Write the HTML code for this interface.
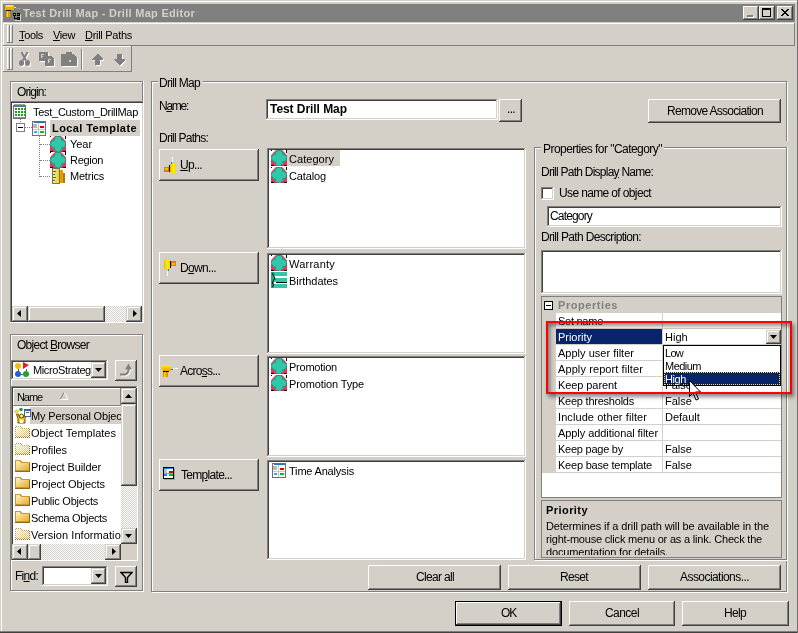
<!DOCTYPE html><html><head><meta charset="utf-8"><title>Test Drill Map - Drill Map Editor</title><style>
html,body{margin:0;padding:0;background:#D4D0C8;}
body{width:798px;height:633px;overflow:hidden;font-family:"Liberation Sans",sans-serif;font-size:11px;}
#win{will-change:transform;position:relative;width:798px;height:633px;background:#D4D0C8;overflow:hidden;}
#win div,#win span.t,#win svg{position:absolute;box-sizing:border-box;}
span.t{white-space:nowrap;line-height:16px;height:16px;}
span.t u{text-decoration:underline;text-underline-offset:1px;}
.btn{background:#D4D0C8;box-shadow:inset -1px -1px #404040,inset 1px 1px #fff,inset -2px -2px #808080,inset 2px 2px #D4D0C8;}
.sbtn{background:#D4D0C8;box-shadow:inset -1px -1px #404040,inset 1px 1px #D4D0C8,inset -2px -2px #808080,inset 2px 2px #fff;}
.sunk{background:#fff;box-shadow:inset -1px -1px #fff,inset 1px 1px #808080,inset -2px -2px #D4D0C8,inset 2px 2px #404040;}
.grp{border:1px solid #808080;box-shadow:1px 1px #fff,inset 1px 1px #fff;}
.thin{box-shadow:inset -1px -1px #808080,inset 1px 1px #fff;}
.thinsunk{box-shadow:inset -1px -1px #fff,inset 1px 1px #808080;}
.hatch{background-image:conic-gradient(#fff 25%,#D4D0C8 0 50%,#fff 0 75%,#D4D0C8 0);background-size:2px 2px;}

</style></head><body><div id="win">
<div class="" style="left:0px;top:0px;width:798px;height:633px;background:#D4D0C8;"></div>
<div class="" style="left:1px;top:1px;width:796px;height:630px;border-top:1px solid #fff;border-left:1px solid #fff;"></div>
<div class="" style="left:0px;top:631px;width:798px;height:1px;background:#808080;"></div>
<div class="" style="left:0px;top:632px;width:798px;height:1px;background:#404040;"></div>
<div class="" style="left:797px;top:0px;width:1px;height:633px;background:#707070;"></div>
<div class="" style="left:3px;top:4px;width:792px;height:18px;background:#808080;"></div>
<svg style="left:5px;top:5px" width="17" height="16" viewBox="0 0 17 16" shape-rendering="crispEdges"><rect x="0" y="0" width="9" height="5" rx="1" fill="#F0B000"/><rect x="1" y="0" width="7" height="2" fill="#FFE040"/><rect x="1" y="5" width="5" height="1" fill="#201000"/><rect x="1" y="6" width="4" height="6" fill="#E8A000"/><rect x="2" y="6" width="1" height="6" fill="#FFD040"/><rect x="9" y="2" width="2" height="1" fill="#C0F0FF"/><rect x="11" y="3" width="5" height="1" fill="#909890"/><rect x="8" y="8" width="3" height="3" fill="#000"/><rect x="9" y="9" width="1" height="1" fill="#F0F000"/><rect x="12" y="8" width="3" height="3" fill="#000"/><rect x="13" y="9" width="1" height="1" fill="#00E000"/><rect x="12" y="12" width="3" height="3" fill="#000"/><rect x="13" y="13" width="1" height="1" fill="#F00000"/><rect x="9" y="11" width="1" height="3" fill="#000"/><rect x="9" y="13" width="3" height="1" fill="#000"/><rect x="15" y="9" width="1" height="7" fill="#D4D0C8"/><rect x="10" y="15" width="6" height="1" fill="#D4D0C8"/></svg>
<div class="btn" style="left:743px;top:6px;width:16px;height:14px;"><div style="left:5px;top:10px;width:6px;height:2px;background:#fff"></div><div style="left:4px;top:9px;width:6px;height:2px;background:#808080"></div></div>
<div class="btn" style="left:759px;top:6px;width:16px;height:14px;"><div style="left:3px;top:2px;width:9px;height:9px;border:1px solid #000;border-top-width:2px"></div></div>
<div class="btn" style="left:777px;top:6px;width:16px;height:14px;"><svg style="left:4px;top:3px" width="8" height="7" shape-rendering="crispEdges"><path d="M0 0h2v1h1v1h2v-1h1v-1h2v1h-1v1h-1v1h-1v1h1v1h1v1h1v1h-2v-1h-1v-1h-2v1h-1v1h-2v-1h1v-1h1v-1h1v-1h-1v-1h-1v-1h-1z" fill="#000"/></svg></div>
<div class="thin" style="left:3px;top:23px;width:792px;height:23px;"></div>
<div class="thin" style="left:7px;top:25px;width:3px;height:18px;"></div>
<div class="thin" style="left:10px;top:25px;width:3px;height:18px;"></div>
<div class="thin" style="left:3px;top:46px;width:129px;height:26px;"></div>
<div class="thin" style="left:7px;top:48px;width:3px;height:22px;"></div>
<div class="thin" style="left:10px;top:48px;width:3px;height:22px;"></div>
<svg style="left:19px;top:52px" width="12" height="15" viewBox="0 0 12 15" shape-rendering="crispEdges"><g transform="translate(1,1)"><g shape-rendering="auto"><path d="M2.500 0L7 8.500M8.500 0L4 8.500" stroke="#fff" stroke-width="2" fill="none"/><ellipse cx="2.500" cy="11" rx="2.500" ry="3" fill="#fff"/><ellipse cx="8.500" cy="11" rx="2.500" ry="3" fill="#fff"/></g></g><g><g shape-rendering="auto"><path d="M2.500 0L7 8.500M8.500 0L4 8.500" stroke="#808080" stroke-width="2" fill="none"/><ellipse cx="2.500" cy="11" rx="2.500" ry="3" fill="#808080"/><ellipse cx="8.500" cy="11" rx="2.500" ry="3" fill="#808080"/></g></g></svg>
<svg style="left:39px;top:52px" width="16" height="15" viewBox="0 0 16 15" shape-rendering="crispEdges"><g transform="translate(1,1)"><rect x="0" y="0" width="9" height="9" fill="#fff"/><path d="M6 4h6l3 3v7h-9z" fill="#fff"/><rect x="2" y="2" width="3" height="1" fill="none"/><rect x="2" y="3" width="1" height="3" fill="none"/><rect x="3" y="4" width="1" height="1" fill="none"/><rect x="9" y="7" width="3" height="1" fill="none"/><rect x="9" y="8" width="1" height="3" fill="none"/><rect x="10" y="9" width="1" height="1" fill="none"/></g><g><rect x="0" y="0" width="9" height="9" fill="#808080"/><path d="M6 4h6l3 3v7h-9z" fill="#808080"/><rect x="2" y="2" width="3" height="1" fill="#D4D0C8"/><rect x="2" y="3" width="1" height="3" fill="#D4D0C8"/><rect x="3" y="4" width="1" height="1" fill="#D4D0C8"/><rect x="9" y="7" width="3" height="1" fill="#D4D0C8"/><rect x="9" y="8" width="1" height="3" fill="#D4D0C8"/><rect x="10" y="9" width="1" height="1" fill="#D4D0C8"/></g></svg>
<svg style="left:61px;top:52px" width="17" height="15" viewBox="0 0 17 15" shape-rendering="crispEdges"><g transform="translate(1,1)"><path d="M0 2h5v-2h6v2h2l3 4v8h-16z" fill="#fff"/><rect x="8" y="8" width="2" height="2" fill="none"/></g><g><path d="M0 2h5v-2h6v2h2l3 4v8h-16z" fill="#808080"/><rect x="8" y="8" width="2" height="2" fill="#D4D0C8"/></g></svg>
<div class="" style="left:81px;top:49px;width:2px;height:21px;border-left:1px solid #808080;border-right:1px solid #fff;"></div>
<svg style="left:92px;top:54px" width="12" height="12" viewBox="0 0 12 12" shape-rendering="crispEdges"><g transform="translate(1,1)"><path d="M5 0h1l5 5v1h-3v5h-5v-5h-3v-1z" fill="#fff"/></g><g><path d="M5 0h1l5 5v1h-3v5h-5v-5h-3v-1z" fill="#808080"/></g></svg>
<svg style="left:114px;top:54px" width="12" height="12" viewBox="0 0 12 12" shape-rendering="crispEdges"><g transform="translate(1,1)"><path d="M5 11h1l5-5v-1h-3v-5h-5v5h-3v1z" fill="#fff"/></g><g><path d="M5 11h1l5-5v-1h-3v-5h-5v5h-3v1z" fill="#808080"/></g></svg>
<div class="thinsunk" style="left:10px;top:81px;width:134px;height:242px;"></div>
<div class="thin" style="left:11px;top:82px;width:132px;height:20px;"></div>
<div class="sunk" style="left:11px;top:102px;width:132px;height:220px;box-shadow:inset 1px 1px #404040,inset -1px -1px #D4D0C8;"></div>
<svg style="left:13px;top:104px" width="13" height="15" viewBox="0 0 13 15" shape-rendering="crispEdges"><rect x="0.5" y="2.5" width="12" height="12" fill="#fff" stroke="#707070"/><rect x="1" y="0" width="11" height="1" fill="#A0A0A0"/><rect x="0" y="1" width="13" height="2" fill="#5878A0"/><rect x="2" y="4" width="2" height="2" fill="#18A018"/><rect x="2" y="7" width="2" height="2" fill="#18A018"/><rect x="2" y="10" width="2" height="2" fill="#18A018"/><rect x="5" y="4" width="2" height="2" fill="#18A018"/><rect x="5" y="7" width="2" height="2" fill="#18A018"/><rect x="5" y="10" width="2" height="2" fill="#18A018"/><rect x="8" y="4" width="2" height="2" fill="#18A018"/><rect x="8" y="7" width="2" height="2" fill="#18A018"/><rect x="8" y="10" width="2" height="2" fill="#18A018"/><rect x="11" y="4" width="2" height="2" fill="#18A018"/><rect x="11" y="7" width="2" height="2" fill="#18A018"/><rect x="11" y="10" width="2" height="2" fill="#18A018"/><rect x="1" y="13" width="11" height="1" fill="#909090"/></svg>
<div class="" style="left:20px;top:119px;width:1px;height:5px;border-left:1px dotted #808080;"></div>
<div class="" style="left:16px;top:123px;width:9px;height:9px;border:1px solid #808080;background:#fff;"><div style="left:1px;top:3px;width:5px;height:1px;background:#000"></div></div>
<div class="" style="left:25px;top:127px;width:7px;height:1px;border-top:1px dotted #808080;"></div>
<svg style="left:32px;top:121px" width="14" height="15" viewBox="0 0 14 15" shape-rendering="crispEdges"><rect x="0.5" y="0.5" width="13" height="14" fill="#fff" stroke="#707070"/><rect x="1" y="1" width="12" height="1" fill="#3070B0"/><rect x="1" y="1" width="1" height="1" fill="#fff"/><rect x="1" y="3" width="4" height="4" fill="#B8B8B8"/><rect x="6" y="2" width="1" height="12" fill="#C8C8C8"/><rect x="1" y="8" width="12" height="1" fill="#C8C8C8"/><rect x="8" y="5" width="4" height="2" fill="#E00000"/><rect x="8" y="10" width="4" height="2" fill="#00C020"/><rect x="2" y="10" width="3" height="2" fill="#20B0F0"/></svg>
<div class="" style="left:50px;top:120px;width:90px;height:16px;background:#D4D0C8;"></div>
<div class="" style="left:39px;top:135px;width:1px;height:42px;border-left:1px dotted #808080;"></div>
<div class="" style="left:40px;top:144px;width:10px;height:1px;border-top:1px dotted #808080;"></div>
<div class="" style="left:40px;top:160px;width:10px;height:1px;border-top:1px dotted #808080;"></div>
<div class="" style="left:40px;top:176px;width:10px;height:1px;border-top:1px dotted #808080;"></div>
<svg style="left:50px;top:136px" width="16" height="16" viewBox="0 0 16 16" shape-rendering="crispEdges"><rect x="0" y="0" width="16" height="16" fill="#fff"/><rect x="0" y="10" width="16" height="6" fill="#E83058"/><polygon points="6.5,0 9.5,0 12.800,3.200 16,7 16,9 12.800,12.800 9.5,16 6.5,16 3.200,12.800 0,9 0,7 3.200,3.200" fill="#E83058" stroke="#E83058" stroke-width="2" shape-rendering="auto"/><path d="M0 0.5h1M15.5 0v3M0 15.5h3M13 15.5h3" stroke="#000" fill="none"/><polygon points="6.5,0 9.5,0 12.800,3.200 16,7 16,9 12.800,12.800 9.5,16 6.5,16 3.200,12.800 0,9 0,7 3.200,3.200" fill="#30C8A8" shape-rendering="auto"/><polygon points="6.5,0.5 9.5,0.5 12.5,3.500 15.5,7 15.5,9 12.5,12.5 9.5,15.5 6.5,15.5 3.500,12.5 0.5,9 0.5,7 3.500,3.500" fill="none" stroke="#189878" stroke-width="1" stroke-dasharray="3 1" shape-rendering="auto"/><rect x="3" y="3" width="2" height="2" fill="#20A888"/><rect x="11" y="3" width="2" height="2" fill="#20A888"/><rect x="3" y="11" width="2" height="2" fill="#20A888"/><rect x="11" y="11" width="2" height="2" fill="#20A888"/></svg>
<svg style="left:50px;top:152px" width="16" height="16" viewBox="0 0 16 16" shape-rendering="crispEdges"><rect x="0" y="0" width="16" height="16" fill="#fff"/><rect x="0" y="10" width="16" height="6" fill="#E83058"/><polygon points="6.5,0 9.5,0 12.800,3.200 16,7 16,9 12.800,12.800 9.5,16 6.5,16 3.200,12.800 0,9 0,7 3.200,3.200" fill="#E83058" stroke="#E83058" stroke-width="2" shape-rendering="auto"/><path d="M0 0.5h1M15.5 0v3M0 15.5h3M13 15.5h3" stroke="#000" fill="none"/><polygon points="6.5,0 9.5,0 12.800,3.200 16,7 16,9 12.800,12.800 9.5,16 6.5,16 3.200,12.800 0,9 0,7 3.200,3.200" fill="#30C8A8" shape-rendering="auto"/><polygon points="6.5,0.5 9.5,0.5 12.5,3.500 15.5,7 15.5,9 12.5,12.5 9.5,15.5 6.5,15.5 3.500,12.5 0.5,9 0.5,7 3.500,3.500" fill="none" stroke="#189878" stroke-width="1" stroke-dasharray="3 1" shape-rendering="auto"/><rect x="3" y="3" width="2" height="2" fill="#20A888"/><rect x="11" y="3" width="2" height="2" fill="#20A888"/><rect x="3" y="11" width="2" height="2" fill="#20A888"/><rect x="11" y="11" width="2" height="2" fill="#20A888"/></svg>
<svg style="left:52px;top:168px" width="14" height="16" viewBox="0 0 14 16" shape-rendering="crispEdges"><defs><linearGradient id="rg" x1="0" y1="0" x2="1" y2="0"><stop offset="0" stop-color="#F8F080"/><stop offset="1" stop-color="#E8D020"/></linearGradient></defs><rect x="8" y="2" width="3" height="13" fill="#E0A000"/><rect x="11" y="5" width="2" height="10" fill="#B87800"/><rect x="0.5" y="0.5" width="7" height="15" fill="url(#rg)" stroke="#707070"/><rect x="1" y="3" width="3" height="1" fill="#606060"/><rect x="1" y="6" width="2" height="1" fill="#606060"/><rect x="1" y="9" width="3" height="1" fill="#606060"/><rect x="1" y="12" width="2" height="1" fill="#606060"/></svg>
<div class="hatch" style="left:12px;top:306px;width:130px;height:16px;"></div>
<div class="sbtn" style="left:12px;top:306px;width:16px;height:16px;"><svg style="left:5px;top:4px" width="4" height="7"><polygon points="4,0 4,7 0,3.5" fill="#000"/></svg></div>
<div class="sbtn" style="left:28px;top:306px;width:77px;height:16px;"></div>
<div class="sbtn" style="left:126px;top:306px;width:16px;height:16px;"><svg style="left:7px;top:4px" width="4" height="7"><polygon points="0,0 0,7 4,3.5" fill="#000"/></svg></div>
<div class="grp" style="left:10px;top:334px;width:133px;height:257px;"></div>
<div class="sunk" style="left:11px;top:360px;width:97px;height:20px;"></div>
<svg style="left:14px;top:362px" width="16" height="16" viewBox="0 0 16 16" shape-rendering="crispEdges"><circle cx="4" cy="4" r="3" fill="#F0C000" shape-rendering="auto"/><circle cx="4" cy="12" r="3" fill="#2060D0" shape-rendering="auto"/><circle cx="12" cy="12" r="3" fill="#20A030" shape-rendering="auto"/><polygon points="9,0 15,3 9,7" fill="#E02020" shape-rendering="auto"/><path d="M4 7v3M7 12h2M12 7v2" stroke="#606060" fill="none"/></svg>
<div class="sbtn" style="left:91px;top:362px;width:15px;height:16px;"><svg style="left:4px;top:6px" width="7" height="4"><polygon points="0,0 7,0 3.5,4" fill="#000"/></svg></div>
<div class="btn" style="left:115px;top:360px;width:22px;height:21px;"><svg style="left:4px;top:3px" width="15" height="15"><g transform="translate(1,1)"><path d="M1 11.5H6Q9.500 11 9.500 6" stroke="#fff" stroke-width="2" fill="none"/><path d="M9.500 0.5L13 6.500H6z" fill="#fff"/></g><path d="M1 11.5H6Q9.500 11 9.500 6" stroke="#808080" stroke-width="2" fill="none"/><path d="M9.500 0.5L13 6.500H6z" fill="#808080"/></svg></div>
<div class="sunk" style="left:11px;top:386px;width:127px;height:175px;"></div>
<div class="thin" style="left:13px;top:388px;width:108px;height:18px;background:#D4D0C8;"></div>
<svg style="left:60px;top:392px" width="9" height="8"><path d="M0.5 7L4 0.5" stroke="#808080" fill="none"/><path d="M4.5 0.5L8 7.5H0.5" stroke="#fff" fill="none"/></svg>
<div class="hatch" style="left:121px;top:388px;width:16px;height:156px;"></div>
<div class="sbtn" style="left:121px;top:388px;width:16px;height:16px;"><svg style="left:4px;top:6px" width="7" height="4"><polygon points="0,4 7,4 3.5,0" fill="#000"/></svg></div>
<div class="sbtn" style="left:121px;top:404px;width:16px;height:82px;"></div>
<div class="sbtn" style="left:121px;top:528px;width:16px;height:16px;"><svg style="left:4px;top:6px" width="7" height="4"><polygon points="0,0 7,0 3.5,4" fill="#000"/></svg></div>
<div class="hatch" style="left:12px;top:544px;width:109px;height:16px;"></div>
<div class="sbtn" style="left:12px;top:544px;width:16px;height:16px;"><svg style="left:5px;top:4px" width="4" height="7"><polygon points="4,0 4,7 0,3.5" fill="#000"/></svg></div>
<div class="sbtn" style="left:28px;top:544px;width:13px;height:16px;"></div>
<div class="sbtn" style="left:105px;top:544px;width:16px;height:16px;"><svg style="left:7px;top:4px" width="4" height="7"><polygon points="0,0 0,7 4,3.5" fill="#000"/></svg></div>
<div class="" style="left:121px;top:544px;width:16px;height:16px;background:#D4D0C8;"></div>
<div class="" style="left:30px;top:407px;width:91px;height:17px;background:#D4D0C8;"></div>
<svg style="left:14px;top:407px" width="17" height="17" viewBox="0 0 17 17" shape-rendering="crispEdges"><path d="M2.500 7.500L4 11.500V16H11V11.500L12.500 7.500L10.500 7L9.500 10.500H5.500L4.500 7Z" fill="#F8D020" stroke="#705000" shape-rendering="auto"/><circle cx="7.500" cy="9" r="2" fill="#FFF0A0" stroke="#705000" shape-rendering="auto"/><rect x="6" y="13" width="3" height="3" fill="#fff"/><rect x="10" y="2" width="6" height="7" fill="#fff" stroke="#506080"/><rect x="10" y="2" width="6" height="2" fill="#3060B0"/><rect x="12" y="5" width="3" height="1" fill="#506080"/><circle cx="7" cy="2.500" r="1.800" fill="#18A028" shape-rendering="auto"/><path d="M2.500 2.500L4.500 4.500L2.500 6.500L0.5 4.500Z" fill="#F8E020" stroke="#C0A000" stroke-width="0.5" shape-rendering="auto"/></svg>
<svg style="left:15px;top:426px" width="15" height="12" viewBox="0 0 15 12" shape-rendering="crispEdges"><defs><linearGradient id="fg" x1="0" y1="0" x2="1" y2="1"><stop offset="0" stop-color="#FFF8C8"/><stop offset="1" stop-color="#E8A828"/></linearGradient><pattern id="dp" width="2" height="2" patternUnits="userSpaceOnUse"><rect x="0" y="0" width="1" height="1" fill="#fff"/><rect x="1" y="1" width="1" height="1" fill="#fff"/></pattern></defs><path d="M0.5 0.5H5.5L6.500 2.500H14.500V10.500H0.5Z" fill="url(#fg)" stroke="#C89838"/><path d="M0 11.5H15M14.500 3V11" stroke="#906818" fill="none"/><rect x="0" y="0" width="15" height="12" fill="url(#dp)"/></svg>
<svg style="left:15px;top:443px" width="15" height="12" viewBox="0 0 15 12" shape-rendering="crispEdges"><defs><linearGradient id="fg" x1="0" y1="0" x2="1" y2="1"><stop offset="0" stop-color="#FFF8C8"/><stop offset="1" stop-color="#E8A828"/></linearGradient><pattern id="dp" width="2" height="2" patternUnits="userSpaceOnUse"><rect x="0" y="0" width="1" height="1" fill="#fff"/><rect x="1" y="1" width="1" height="1" fill="#fff"/></pattern></defs><path d="M0.5 0.5H5.5L6.500 2.500H14.500V10.500H0.5Z" fill="url(#fg)" stroke="#C89838"/><path d="M0 11.5H15M14.500 3V11" stroke="#906818" fill="none"/><rect x="0" y="0" width="15" height="12" fill="url(#dp)"/></svg>
<svg style="left:15px;top:460px" width="15" height="12" viewBox="0 0 15 12" shape-rendering="crispEdges"><defs><linearGradient id="fg" x1="0" y1="0" x2="1" y2="1"><stop offset="0" stop-color="#FFF8C8"/><stop offset="1" stop-color="#E8A828"/></linearGradient><pattern id="dp" width="2" height="2" patternUnits="userSpaceOnUse"><rect x="0" y="0" width="1" height="1" fill="#fff"/><rect x="1" y="1" width="1" height="1" fill="#fff"/></pattern></defs><path d="M0.5 0.5H5.5L6.500 2.500H14.500V10.500H0.5Z" fill="url(#fg)" stroke="#C89838"/><path d="M0 11.5H15M14.500 3V11" stroke="#906818" fill="none"/></svg>
<svg style="left:15px;top:477px" width="15" height="12" viewBox="0 0 15 12" shape-rendering="crispEdges"><defs><linearGradient id="fg" x1="0" y1="0" x2="1" y2="1"><stop offset="0" stop-color="#FFF8C8"/><stop offset="1" stop-color="#E8A828"/></linearGradient><pattern id="dp" width="2" height="2" patternUnits="userSpaceOnUse"><rect x="0" y="0" width="1" height="1" fill="#fff"/><rect x="1" y="1" width="1" height="1" fill="#fff"/></pattern></defs><path d="M0.5 0.5H5.5L6.500 2.500H14.500V10.500H0.5Z" fill="url(#fg)" stroke="#C89838"/><path d="M0 11.5H15M14.500 3V11" stroke="#906818" fill="none"/></svg>
<svg style="left:15px;top:494px" width="15" height="12" viewBox="0 0 15 12" shape-rendering="crispEdges"><defs><linearGradient id="fg" x1="0" y1="0" x2="1" y2="1"><stop offset="0" stop-color="#FFF8C8"/><stop offset="1" stop-color="#E8A828"/></linearGradient><pattern id="dp" width="2" height="2" patternUnits="userSpaceOnUse"><rect x="0" y="0" width="1" height="1" fill="#fff"/><rect x="1" y="1" width="1" height="1" fill="#fff"/></pattern></defs><path d="M0.5 0.5H5.5L6.500 2.500H14.500V10.500H0.5Z" fill="url(#fg)" stroke="#C89838"/><path d="M0 11.5H15M14.500 3V11" stroke="#906818" fill="none"/></svg>
<svg style="left:15px;top:511px" width="15" height="12" viewBox="0 0 15 12" shape-rendering="crispEdges"><defs><linearGradient id="fg" x1="0" y1="0" x2="1" y2="1"><stop offset="0" stop-color="#FFF8C8"/><stop offset="1" stop-color="#E8A828"/></linearGradient><pattern id="dp" width="2" height="2" patternUnits="userSpaceOnUse"><rect x="0" y="0" width="1" height="1" fill="#fff"/><rect x="1" y="1" width="1" height="1" fill="#fff"/></pattern></defs><path d="M0.5 0.5H5.5L6.500 2.500H14.500V10.500H0.5Z" fill="url(#fg)" stroke="#C89838"/><path d="M0 11.5H15M14.500 3V11" stroke="#906818" fill="none"/></svg>
<svg style="left:15px;top:528px" width="15" height="12" viewBox="0 0 15 12" shape-rendering="crispEdges"><defs><linearGradient id="fg" x1="0" y1="0" x2="1" y2="1"><stop offset="0" stop-color="#FFF8C8"/><stop offset="1" stop-color="#E8A828"/></linearGradient><pattern id="dp" width="2" height="2" patternUnits="userSpaceOnUse"><rect x="0" y="0" width="1" height="1" fill="#fff"/><rect x="1" y="1" width="1" height="1" fill="#fff"/></pattern></defs><path d="M0.5 0.5H5.5L6.500 2.500H14.500V10.500H0.5Z" fill="url(#fg)" stroke="#C89838"/><path d="M0 11.5H15M14.500 3V11" stroke="#906818" fill="none"/><rect x="0" y="0" width="15" height="12" fill="url(#dp)"/></svg>
<div class="sunk" style="left:42px;top:566px;width:66px;height:20px;"></div>
<div class="sbtn" style="left:91px;top:568px;width:15px;height:16px;"><svg style="left:4px;top:6px" width="7" height="4"><polygon points="0,0 7,0 3.5,4" fill="#000"/></svg></div>
<div class="btn" style="left:115px;top:566px;width:22px;height:21px;"><svg style="left:5px;top:5px" width="13" height="12"><path d="M1 1.500h11L7.500 6.500v5h-2v-5z" fill="none" stroke="#000" stroke-width="1.4"/></svg></div>
<div class="grp" style="left:151px;top:81px;width:636px;height:511px;"></div>
<div class="" style="left:158px;top:75px;width:45px;height:14px;background:#D4D0C8;"></div>
<div class="sunk" style="left:266px;top:99px;width:232px;height:21px;"></div>
<div class="btn" style="left:499px;top:99px;width:23px;height:23px;"></div>
<div class="btn" style="left:648px;top:99px;width:133px;height:24px;"></div>
<div class="btn" style="left:159px;top:149px;width:100px;height:32px;"></div>
<div class="btn" style="left:159px;top:252px;width:100px;height:32px;"></div>
<div class="btn" style="left:159px;top:355px;width:100px;height:32px;"></div>
<div class="btn" style="left:159px;top:459px;width:100px;height:32px;"></div>
<svg style="left:164px;top:157px" width="12" height="16" viewBox="0 0 12 16" shape-rendering="crispEdges"><defs><linearGradient id="yg" x1="0" y1="0" x2="1" y2="0"><stop offset="0" stop-color="#F8B000"/><stop offset="0.5" stop-color="#FFF000"/><stop offset="1" stop-color="#F8D800"/></linearGradient><linearGradient id="yg2" x1="0" y1="0" x2="0" y2="1"><stop offset="0" stop-color="#FFF000"/><stop offset="1" stop-color="#F0A000"/></linearGradient></defs><rect x="8" y="0" width="1" height="5" fill="#fff"/><rect x="7" y="5" width="3" height="2" fill="#A8D0E8"/><rect x="7" y="5" width="1" height="2" fill="#607080"/><rect x="6" y="7" width="6" height="9" rx="1" fill="url(#yg)" shape-rendering="auto"/><rect x="5" y="8" width="1" height="7" fill="#000"/><rect x="0" y="10" width="5" height="5" fill="#D88000"/><rect x="1" y="11" width="3" height="2" fill="#FFC000"/></svg>
<svg style="left:164px;top:260px" width="12" height="17" viewBox="0 0 12 17" shape-rendering="crispEdges"><defs><linearGradient id="yg" x1="0" y1="0" x2="1" y2="0"><stop offset="0" stop-color="#F8B000"/><stop offset="0.5" stop-color="#FFF000"/><stop offset="1" stop-color="#F8D800"/></linearGradient><linearGradient id="yg2" x1="0" y1="0" x2="0" y2="1"><stop offset="0" stop-color="#FFF000"/><stop offset="1" stop-color="#F0A000"/></linearGradient></defs><rect x="0" y="0" width="6" height="9" rx="1" fill="url(#yg)" shape-rendering="auto"/><rect x="6" y="1" width="1" height="7" fill="#000"/><rect x="7" y="1" width="5" height="5" fill="#D88000"/><rect x="8" y="3" width="3" height="2" fill="#FFC000"/><rect x="2" y="9" width="3" height="2" fill="#A8D0E8"/><rect x="4" y="9" width="1" height="2" fill="#607080"/><rect x="3" y="11" width="1" height="5" fill="#fff"/></svg>
<svg style="left:162px;top:365px" width="16" height="13" viewBox="0 0 16 13" shape-rendering="crispEdges"><defs><linearGradient id="yg" x1="0" y1="0" x2="1" y2="0"><stop offset="0" stop-color="#F8B000"/><stop offset="0.5" stop-color="#FFF000"/><stop offset="1" stop-color="#F8D800"/></linearGradient><linearGradient id="yg2" x1="0" y1="0" x2="0" y2="1"><stop offset="0" stop-color="#FFF000"/><stop offset="1" stop-color="#F0A000"/></linearGradient></defs><rect x="0" y="0" width="9" height="6" rx="1" fill="url(#yg2)" shape-rendering="auto"/><rect x="1" y="6" width="6" height="1" fill="#000"/><rect x="1" y="7" width="5" height="5" fill="#E09800"/><rect x="2" y="7" width="2" height="5" fill="#FFC000"/><rect x="9" y="2" width="2" height="3" fill="#A8D0E8"/><rect x="9" y="4" width="2" height="1" fill="#607080"/><rect x="11" y="3" width="5" height="1" fill="#fff"/></svg>
<svg style="left:163px;top:467px" width="12" height="13" viewBox="0 0 12 13" shape-rendering="crispEdges"><rect x="1" y="1" width="11" height="12" fill="#A8A49C"/><rect x="0" y="0" width="11" height="12" fill="#000"/><rect x="1" y="1" width="9" height="10" fill="#fff"/><rect x="1" y="1" width="9" height="1" fill="#2080FF"/><rect x="1" y="2" width="3" height="4" fill="#C0C0C0"/><rect x="1" y="6" width="9" height="1" fill="#A0A0A0"/><rect x="6" y="4" width="4" height="2" fill="#E00000"/><rect x="1" y="7" width="3" height="2" fill="#2080FF"/><rect x="6" y="7" width="4" height="2" fill="#00C020"/></svg>
<div class="sunk" style="left:267px;top:148px;width:259px;height:101px;"></div>
<div class="" style="left:287px;top:150px;width:53px;height:16px;background:#D4D0C8;"></div>
<svg style="left:271px;top:150px" width="16" height="16" viewBox="0 0 16 16" shape-rendering="crispEdges"><rect x="0" y="0" width="16" height="16" fill="#fff"/><rect x="0" y="10" width="16" height="6" fill="#E83058"/><polygon points="6.5,0 9.5,0 12.800,3.200 16,7 16,9 12.800,12.800 9.5,16 6.5,16 3.200,12.800 0,9 0,7 3.200,3.200" fill="#E83058" stroke="#E83058" stroke-width="2" shape-rendering="auto"/><path d="M0 0.5h1M15.5 0v3M0 15.5h3M13 15.5h3" stroke="#000" fill="none"/><polygon points="6.5,0 9.5,0 12.800,3.200 16,7 16,9 12.800,12.800 9.5,16 6.5,16 3.200,12.800 0,9 0,7 3.200,3.200" fill="#30C8A8" shape-rendering="auto"/><polygon points="6.5,0.5 9.5,0.5 12.5,3.500 15.5,7 15.5,9 12.5,12.5 9.5,15.5 6.5,15.5 3.500,12.5 0.5,9 0.5,7 3.500,3.500" fill="none" stroke="#189878" stroke-width="1" stroke-dasharray="3 1" shape-rendering="auto"/><rect x="3" y="3" width="2" height="2" fill="#20A888"/><rect x="11" y="3" width="2" height="2" fill="#20A888"/><rect x="3" y="11" width="2" height="2" fill="#20A888"/><rect x="11" y="11" width="2" height="2" fill="#20A888"/></svg>
<svg style="left:271px;top:167px" width="16" height="16" viewBox="0 0 16 16" shape-rendering="crispEdges"><rect x="0" y="0" width="16" height="16" fill="#fff"/><rect x="0" y="10" width="16" height="6" fill="#E83058"/><polygon points="6.5,0 9.5,0 12.800,3.200 16,7 16,9 12.800,12.800 9.5,16 6.5,16 3.200,12.800 0,9 0,7 3.200,3.200" fill="#E83058" stroke="#E83058" stroke-width="2" shape-rendering="auto"/><path d="M0 0.5h1M15.5 0v3M0 15.5h3M13 15.5h3" stroke="#000" fill="none"/><polygon points="6.5,0 9.5,0 12.800,3.200 16,7 16,9 12.800,12.800 9.5,16 6.5,16 3.200,12.800 0,9 0,7 3.200,3.200" fill="#30C8A8" shape-rendering="auto"/><polygon points="6.5,0.5 9.5,0.5 12.5,3.500 15.5,7 15.5,9 12.5,12.5 9.5,15.5 6.5,15.5 3.500,12.5 0.5,9 0.5,7 3.500,3.500" fill="none" stroke="#189878" stroke-width="1" stroke-dasharray="3 1" shape-rendering="auto"/><rect x="3" y="3" width="2" height="2" fill="#20A888"/><rect x="11" y="3" width="2" height="2" fill="#20A888"/><rect x="3" y="11" width="2" height="2" fill="#20A888"/><rect x="11" y="11" width="2" height="2" fill="#20A888"/></svg>
<div class="sunk" style="left:267px;top:253px;width:259px;height:101px;"></div>
<svg style="left:271px;top:255px" width="16" height="16" viewBox="0 0 16 16" shape-rendering="crispEdges"><rect x="0" y="0" width="16" height="16" fill="#fff"/><rect x="0" y="10" width="16" height="6" fill="#E83058"/><polygon points="6.5,0 9.5,0 12.800,3.200 16,7 16,9 12.800,12.800 9.5,16 6.5,16 3.200,12.800 0,9 0,7 3.200,3.200" fill="#E83058" stroke="#E83058" stroke-width="2" shape-rendering="auto"/><path d="M0 0.5h1M15.5 0v3M0 15.5h3M13 15.5h3" stroke="#000" fill="none"/><polygon points="6.5,0 9.5,0 12.800,3.200 16,7 16,9 12.800,12.800 9.5,16 6.5,16 3.200,12.800 0,9 0,7 3.200,3.200" fill="#30C8A8" shape-rendering="auto"/><polygon points="6.5,0.5 9.5,0.5 12.5,3.500 15.5,7 15.5,9 12.5,12.5 9.5,15.5 6.5,15.5 3.500,12.5 0.5,9 0.5,7 3.500,3.500" fill="none" stroke="#189878" stroke-width="1" stroke-dasharray="3 1" shape-rendering="auto"/><rect x="3" y="3" width="2" height="2" fill="#20A888"/><rect x="11" y="3" width="2" height="2" fill="#20A888"/><rect x="3" y="11" width="2" height="2" fill="#20A888"/><rect x="11" y="11" width="2" height="2" fill="#20A888"/></svg>
<svg style="left:271px;top:272px" width="16" height="16" viewBox="0 0 16 16" shape-rendering="crispEdges"><rect x="3" y="0" width="13" height="4" fill="#30C8A8"/><rect x="3" y="6" width="13" height="4" fill="#30C8A8"/><rect x="3" y="12" width="13" height="4" fill="#30C8A8"/><rect x="0" y="0" width="3" height="16" fill="#20A888"/><path d="M1 1l3 5-3 5 M1 11l2 2-2 2" stroke="#000" fill="none" shape-rendering="auto"/><rect x="5" y="10" width="11" height="1" fill="#000"/><rect x="3" y="1" width="1" height="1" fill="#E83058"/><rect x="4" y="7" width="1" height="1" fill="#E83058"/></svg>
<div class="sunk" style="left:267px;top:356px;width:259px;height:101px;"></div>
<svg style="left:271px;top:358px" width="16" height="16" viewBox="0 0 16 16" shape-rendering="crispEdges"><rect x="0" y="0" width="16" height="16" fill="#fff"/><rect x="0" y="10" width="16" height="6" fill="#E83058"/><polygon points="6.5,0 9.5,0 12.800,3.200 16,7 16,9 12.800,12.800 9.5,16 6.5,16 3.200,12.800 0,9 0,7 3.200,3.200" fill="#E83058" stroke="#E83058" stroke-width="2" shape-rendering="auto"/><path d="M0 0.5h1M15.5 0v3M0 15.5h3M13 15.5h3" stroke="#000" fill="none"/><polygon points="6.5,0 9.5,0 12.800,3.200 16,7 16,9 12.800,12.800 9.5,16 6.5,16 3.200,12.800 0,9 0,7 3.200,3.200" fill="#30C8A8" shape-rendering="auto"/><polygon points="6.5,0.5 9.5,0.5 12.5,3.500 15.5,7 15.5,9 12.5,12.5 9.5,15.5 6.5,15.5 3.500,12.5 0.5,9 0.5,7 3.500,3.500" fill="none" stroke="#189878" stroke-width="1" stroke-dasharray="3 1" shape-rendering="auto"/><rect x="3" y="3" width="2" height="2" fill="#20A888"/><rect x="11" y="3" width="2" height="2" fill="#20A888"/><rect x="3" y="11" width="2" height="2" fill="#20A888"/><rect x="11" y="11" width="2" height="2" fill="#20A888"/></svg>
<svg style="left:271px;top:375px" width="16" height="16" viewBox="0 0 16 16" shape-rendering="crispEdges"><rect x="0" y="0" width="16" height="16" fill="#fff"/><rect x="0" y="10" width="16" height="6" fill="#E83058"/><polygon points="6.5,0 9.5,0 12.800,3.200 16,7 16,9 12.800,12.800 9.5,16 6.5,16 3.200,12.800 0,9 0,7 3.200,3.200" fill="#E83058" stroke="#E83058" stroke-width="2" shape-rendering="auto"/><path d="M0 0.5h1M15.5 0v3M0 15.5h3M13 15.5h3" stroke="#000" fill="none"/><polygon points="6.5,0 9.5,0 12.800,3.200 16,7 16,9 12.800,12.800 9.5,16 6.5,16 3.200,12.800 0,9 0,7 3.200,3.200" fill="#30C8A8" shape-rendering="auto"/><polygon points="6.5,0.5 9.5,0.5 12.5,3.500 15.5,7 15.5,9 12.5,12.5 9.5,15.5 6.5,15.5 3.500,12.5 0.5,9 0.5,7 3.500,3.500" fill="none" stroke="#189878" stroke-width="1" stroke-dasharray="3 1" shape-rendering="auto"/><rect x="3" y="3" width="2" height="2" fill="#20A888"/><rect x="11" y="3" width="2" height="2" fill="#20A888"/><rect x="3" y="11" width="2" height="2" fill="#20A888"/><rect x="11" y="11" width="2" height="2" fill="#20A888"/></svg>
<div class="sunk" style="left:267px;top:460px;width:259px;height:100px;"></div>
<svg style="left:272px;top:463px" width="14" height="15" viewBox="0 0 14 15" shape-rendering="crispEdges"><rect x="0.5" y="0.5" width="13" height="14" fill="#fff" stroke="#707070"/><rect x="1" y="1" width="12" height="1" fill="#3070B0"/><rect x="1" y="1" width="1" height="1" fill="#fff"/><rect x="1" y="3" width="4" height="4" fill="#B8B8B8"/><rect x="6" y="2" width="1" height="12" fill="#C8C8C8"/><rect x="1" y="8" width="12" height="1" fill="#C8C8C8"/><rect x="8" y="5" width="4" height="2" fill="#E00000"/><rect x="8" y="10" width="4" height="2" fill="#00C020"/><rect x="2" y="10" width="3" height="2" fill="#20B0F0"/></svg>
<div class="btn" style="left:368px;top:565px;width:133px;height:25px;"></div>
<div class="btn" style="left:508px;top:565px;width:133px;height:25px;"></div>
<div class="btn" style="left:648px;top:565px;width:133px;height:25px;"></div>
<div class="" style="left:780px;top:141px;width:9px;height:6px;background:#D4D0C8;"></div>
<div class="grp" style="left:534px;top:147px;width:253px;height:413px;"></div>
<div class="" style="left:541px;top:141px;width:123px;height:14px;background:#D4D0C8;"></div>
<div class="sunk" style="left:541px;top:187px;width:13px;height:13px;"></div>
<div class="sunk" style="left:547px;top:206px;width:235px;height:21px;"></div>
<div class="sunk" style="left:541px;top:250px;width:241px;height:44px;"></div>
<div class="" style="left:541px;top:296px;width:241px;height:202px;background:#fff;border:1px solid #808080;"></div>
<div class="" style="left:542px;top:297px;width:239px;height:16px;background:#D4D0C8;"></div>
<div class="" style="left:542px;top:313px;width:14px;height:160px;background:#D4D0C8;"></div>
<div class="" style="left:544px;top:301px;width:9px;height:9px;border:1px solid #000;background:#fff;"><div style="left:1px;top:3px;width:5px;height:1px;background:#000"></div></div>
<div class="" style="left:556px;top:328px;width:225px;height:1px;background:#D4D0C8;"></div>
<div class="" style="left:556px;top:344px;width:225px;height:1px;background:#D4D0C8;"></div>
<div class="" style="left:556px;top:329px;width:106px;height:15px;background:#0A246A;"></div>
<div class="" style="left:556px;top:360px;width:225px;height:1px;background:#D4D0C8;"></div>
<div class="" style="left:556px;top:376px;width:225px;height:1px;background:#D4D0C8;"></div>
<div class="" style="left:556px;top:392px;width:225px;height:1px;background:#D4D0C8;"></div>
<div class="" style="left:556px;top:408px;width:225px;height:1px;background:#D4D0C8;"></div>
<div class="" style="left:556px;top:424px;width:225px;height:1px;background:#D4D0C8;"></div>
<div class="" style="left:556px;top:440px;width:225px;height:1px;background:#D4D0C8;"></div>
<div class="" style="left:556px;top:456px;width:225px;height:1px;background:#D4D0C8;"></div>
<div class="" style="left:556px;top:472px;width:225px;height:1px;background:#D4D0C8;"></div>
<div class="" style="left:662px;top:313px;width:1px;height:160px;background:#D4D0C8;"></div>
<div class="sbtn" style="left:766px;top:330px;width:15px;height:14px;"><svg style="left:4px;top:5px" width="7" height="4"><polygon points="0,0 7,0 3.5,4" fill="#000"/></svg></div>
<div class="" style="left:663px;top:345px;width:118px;height:41px;background:#fff;border:1px solid #000;"></div>
<div class="" style="left:664px;top:372px;width:116px;height:13px;background:#0A246A;outline:1px dotted #F5DB95;outline-offset:-1px;"></div>
<div class="" style="left:541px;top:500px;width:241px;height:58px;border:1px solid #808080;background:#D4D0C8;overflow:hidden;"></div>
<div class="" style="left:455px;top:601px;width:107px;height:25px;background:#000;"></div>
<div class="btn" style="left:456px;top:602px;width:105px;height:23px;"></div>
<div class="btn" style="left:569px;top:601px;width:106px;height:25px;"></div>
<div class="btn" style="left:682px;top:601px;width:107px;height:25px;"></div>
<span class="t" style="left:23px;top:5px;font-size:11px;color:#D4D0C8;font-weight:bold;letter-spacing:0.292px;">Test Drill Map - Drill Map Editor</span>
<span class="t" style="left:19px;top:27px;font-size:11px;color:#000;letter-spacing:-0.338px;"><u>T</u>ools</span>
<span class="t" style="left:53px;top:27px;font-size:11px;color:#000;letter-spacing:-0.414px;"><u>V</u>iew</span>
<span class="t" style="left:85px;top:27px;font-size:11px;color:#000;letter-spacing:-0.286px;"><u>D</u>rill Paths</span>
<span class="t" style="left:17px;top:84px;font-size:12px;color:#000;letter-spacing:-0.906px;">Origin:</span>
<span class="t" style="left:33px;top:104px;font-size:11px;color:#000;letter-spacing:-0.283px;">Test_Custom_DrillMap</span>
<span class="t" style="left:52px;top:120px;font-size:11px;color:#000;font-weight:bold;letter-spacing:0.410px;">Local Template</span>
<span class="t" style="left:70px;top:136px;font-size:11px;color:#000;letter-spacing:-0.059px;">Year</span>
<span class="t" style="left:70px;top:152px;font-size:11px;color:#000;letter-spacing:-0.310px;">Region</span>
<span class="t" style="left:70px;top:168px;font-size:11px;color:#000;letter-spacing:-0.208px;">Metrics</span>
<span class="t" style="left:17px;top:337px;font-size:12px;color:#000;letter-spacing:-0.718px;">Object <u>B</u>rowser</span>
<span class="t" style="left:33px;top:362px;font-size:11px;color:#000;letter-spacing:-0.374px;width:58px;overflow:hidden;">MicroStrategy</span>
<span class="t" style="left:17px;top:389px;font-size:11px;color:#000;letter-spacing:-1.086px;">Name</span>
<span class="t" style="left:31px;top:408px;font-size:11px;color:#000;letter-spacing:-0.131px;width:90px;overflow:hidden;">My Personal Objects</span>
<span class="t" style="left:31px;top:425px;font-size:11px;color:#000;letter-spacing:0.013px;">Object Templates</span>
<span class="t" style="left:31px;top:442px;font-size:11px;color:#000;letter-spacing:-0.086px;">Profiles</span>
<span class="t" style="left:31px;top:459px;font-size:11px;color:#000;letter-spacing:-0.103px;">Project Builder</span>
<span class="t" style="left:31px;top:476px;font-size:11px;color:#000;letter-spacing:-0.040px;">Project Objects</span>
<span class="t" style="left:31px;top:493px;font-size:11px;color:#000;letter-spacing:-0.237px;">Public Objects</span>
<span class="t" style="left:31px;top:510px;font-size:11px;color:#000;letter-spacing:-0.336px;">Schema Objects</span>
<span class="t" style="left:31px;top:527px;font-size:11px;color:#000;letter-spacing:0.064px;width:90px;overflow:hidden;">Version Information</span>
<span class="t" style="left:15px;top:568px;font-size:12px;color:#000;letter-spacing:-0.741px;">Fi<u>n</u>d:</span>
<span class="t" style="left:159px;top:75px;font-size:12px;color:#000;letter-spacing:-0.705px;">Drill Map</span>
<span class="t" style="left:159px;top:98px;font-size:12px;color:#000;letter-spacing:-1.275px;">N<u>a</u>me:</span>
<span class="t" style="left:270px;top:101px;font-size:12px;color:#000;font-weight:bold;letter-spacing:-0.057px;">Test Drill Map</span>
<span class="t" style="left:507px;top:101px;font-size:12px;color:#000;letter-spacing:-0.672px;">...</span>
<span class="t" style="left:667px;top:103px;font-size:12px;color:#000;letter-spacing:-0.707px;">Remove Association</span>
<span class="t" style="left:159px;top:130px;font-size:12px;color:#000;letter-spacing:-0.751px;">Drill Paths:</span>
<span class="t" style="left:180px;top:157px;font-size:12px;color:#000;letter-spacing:-0.672px;"><u>U</u>p...</span>
<span class="t" style="left:180px;top:260px;font-size:12px;color:#000;letter-spacing:-0.672px;">D<u>o</u>wn...</span>
<span class="t" style="left:180px;top:363px;font-size:12px;color:#000;letter-spacing:-0.745px;">Acro<u>s</u>s...</span>
<span class="t" style="left:181px;top:467px;font-size:12px;color:#000;letter-spacing:-0.702px;">Tem<u>p</u>late...</span>
<span class="t" style="left:289px;top:151px;font-size:11px;color:#000;letter-spacing:0.045px;">Category</span>
<span class="t" style="left:289px;top:168px;font-size:11px;color:#000;letter-spacing:-0.132px;">Catalog</span>
<span class="t" style="left:289px;top:256px;font-size:11px;color:#000;letter-spacing:0.223px;">Warranty</span>
<span class="t" style="left:289px;top:273px;font-size:11px;color:#000;letter-spacing:-0.053px;">Birthdates</span>
<span class="t" style="left:289px;top:359px;font-size:11px;color:#000;letter-spacing:-0.238px;">Promotion</span>
<span class="t" style="left:289px;top:376px;font-size:11px;color:#000;letter-spacing:-0.132px;">Promotion Type</span>
<span class="t" style="left:289px;top:463px;font-size:11px;color:#000;letter-spacing:-0.189px;">Time Analysis</span>
<span class="t" style="left:416px;top:569px;font-size:12px;color:#000;letter-spacing:-0.668px;">Clear all</span>
<span class="t" style="left:560px;top:569px;font-size:12px;color:#000;letter-spacing:-0.672px;">Reset</span>
<span class="t" style="left:680px;top:569px;font-size:12px;color:#000;letter-spacing:-0.558px;">Associations...</span>
<span class="t" style="left:543px;top:141px;font-size:12px;color:#000;letter-spacing:-0.543px;">Properties for &quot;Category&quot;</span>
<span class="t" style="left:541px;top:164px;font-size:12px;color:#000;letter-spacing:-0.752px;">Drill Path Displa<u>y</u> Name:</span>
<span class="t" style="left:559px;top:185px;font-size:12px;color:#000;letter-spacing:-0.633px;">Use name of object</span>
<span class="t" style="left:550px;top:208px;font-size:12px;color:#000;letter-spacing:-0.838px;">Category</span>
<span class="t" style="left:541px;top:229px;font-size:12px;color:#000;letter-spacing:-0.668px;">Drill Path Description:</span>
<span class="t" style="left:558px;top:297px;font-size:11px;color:#808080;font-weight:bold;letter-spacing:0.558px;">Properties</span>
<span class="t" style="left:558px;top:313px;font-size:11px;color:#000;letter-spacing:-0.262px;">Set name</span>
<span class="t" style="left:558px;top:329px;font-size:11px;color:#fff;letter-spacing:-0.029px;">Priority</span>
<span class="t" style="left:665px;top:329px;font-size:11px;color:#000;">High</span>
<span class="t" style="left:558px;top:345px;font-size:11px;color:#000;letter-spacing:0.011px;">Apply user filter</span>
<span class="t" style="left:558px;top:361px;font-size:11px;color:#000;letter-spacing:0.097px;">Apply report filter</span>
<span class="t" style="left:558px;top:377px;font-size:11px;color:#000;letter-spacing:-0.085px;">Keep parent</span>
<span class="t" style="left:665px;top:377px;font-size:11px;color:#000;">False</span>
<span class="t" style="left:558px;top:393px;font-size:11px;color:#000;letter-spacing:-0.233px;">Keep thresholds</span>
<span class="t" style="left:665px;top:393px;font-size:11px;color:#000;">False</span>
<span class="t" style="left:558px;top:409px;font-size:11px;color:#000;letter-spacing:0.078px;">Include other filter</span>
<span class="t" style="left:665px;top:409px;font-size:11px;color:#000;">Default</span>
<span class="t" style="left:558px;top:425px;font-size:11px;color:#000;letter-spacing:-0.066px;">Apply additional filter</span>
<span class="t" style="left:558px;top:441px;font-size:11px;color:#000;letter-spacing:-0.241px;">Keep page by</span>
<span class="t" style="left:665px;top:441px;font-size:11px;color:#000;">False</span>
<span class="t" style="left:558px;top:457px;font-size:11px;color:#000;letter-spacing:-0.214px;">Keep base template</span>
<span class="t" style="left:665px;top:457px;font-size:11px;color:#000;">False</span>
<span class="t" style="left:665px;top:345px;font-size:11px;color:#000;letter-spacing:-0.729px;">Low</span>
<span class="t" style="left:665px;top:358px;font-size:11px;color:#000;letter-spacing:-0.521px;">Medium</span>
<span class="t" style="left:665px;top:371px;font-size:11px;color:#fff;letter-spacing:-0.406px;">High</span>
<span class="t" style="left:546px;top:502px;font-size:11px;color:#000;font-weight:bold;letter-spacing:0.436px;">Priority</span>
<span class="t" style="left:546px;top:518px;font-size:11px;color:#000;letter-spacing:-0.111px;">Determines if a drill path will be available in the</span>
<span class="t" style="left:546px;top:531px;font-size:11px;color:#000;letter-spacing:-0.195px;">right-mouse click menu or as a link. Check the</span>
<span class="t" style="left:546px;top:544px;font-size:11px;color:#000;letter-spacing:-0.153px;height:11px;overflow:hidden;">documentation for details.</span>
<span class="t" style="left:501px;top:605px;font-size:12px;color:#000;letter-spacing:-1.172px;">OK</span>
<span class="t" style="left:605px;top:605px;font-size:12px;color:#000;letter-spacing:-0.560px;">Cancel</span>
<span class="t" style="left:724px;top:605px;font-size:12px;color:#000;letter-spacing:-0.672px;">Help</span>
<svg style="left:688px;top:379px" width="14" height="23"><path d="M1.500 1.500V17.5l3.500-3.500 3 7 2.500-1-3-7h5z" fill="#fff" stroke="#000" stroke-width="1"/></svg>
<div class="" style="left:546px;top:321px;width:246px;height:73px;border:2px solid #FF0000;box-shadow:2px 3px 4px rgba(0,0,0,0.45),inset 2px 3px 4px rgba(0,0,0,0.45);"></div>
<div class="" style="left:546px;top:321px;width:246px;height:73px;border:2px solid #FF0000;"></div>
</div></body></html>
